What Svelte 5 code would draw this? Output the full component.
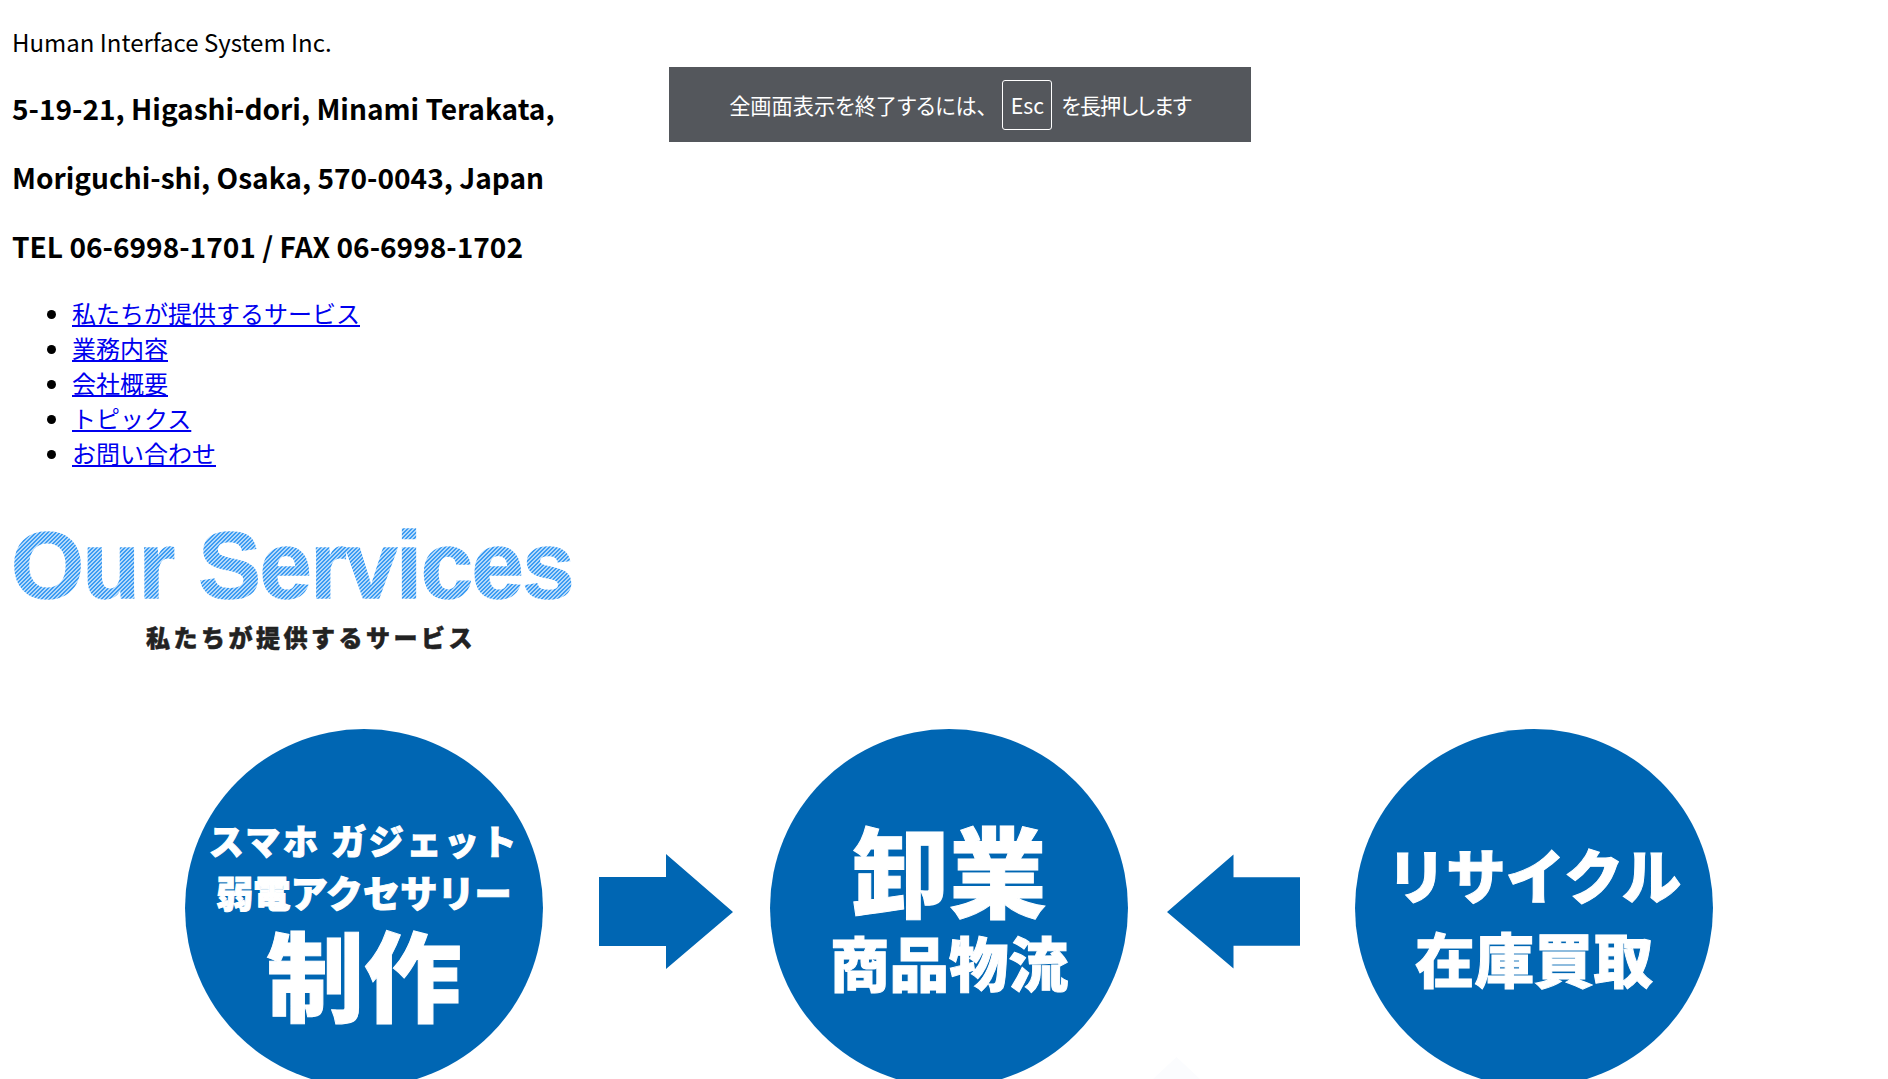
<script>
  const links = ['私たちが提供するサービス', '業務内容', '会社概要', 'トピックス', 'お問い合わせ'];
</script>

<div class="page">
  <p class="company">Human Interface System Inc.</p>
  <h3>5-19-21, Higashi-dori, Minami Terakata,</h3>
  <h3>Moriguchi-shi, Osaka, 570-0043, Japan</h3>
  <h3>TEL 06-6998-1701 / FAX 06-6998-1702</h3>
  <ul>
    {#each links as link}
      <li><a href="#top">{link}</a></li>
    {/each}
  </ul>

  <section class="title">
    <div class="en">Our Services</div>
    <div class="ja">私たちが提供するサービス</div>
  </section>

  <section class="flow">
    <div class="circle c1">
      <span class="l1">スマホ ガジェット</span>
      <span class="l2">弱電アクセサリー</span>
      <span class="big">制作</span>
    </div>
    <svg class="arrow a1" viewBox="0 0 134 115" aria-hidden="true"><path d="M0 23H67V0L134 58L67 115V92H0Z" /></svg>
    <div class="circle c2">
      <span class="big">卸業</span>
      <span class="mid">商品物流</span>
    </div>
    <svg class="arrow a2" viewBox="0 0 134 115" aria-hidden="true"><path d="M134 23H67V0L0 58L67 115V92H134Z" /></svg>
    <div class="circle c3">
      <span class="mid">リサイクル</span>
      <span class="mid low">在庫買取</span>
    </div>
  </section>
</div>

<div class="smudge"></div>

<div class="bubble">
  <span class="before">全画面表示を終了するには、</span>
  <kbd>Esc</kbd>
  <span class="after">を長押しします</span>
</div>

<style>
  :global(body) {
    margin: 0;
    background: #fff;
    color: #000;
    font-family: "Noto Sans CJK JP", "Noto Sans", sans-serif;
    font-size: 24px;
    overflow: hidden;
  }
  .page {
    height: 1079px;
    overflow: hidden;
    padding: 24px 12px 0;
    box-sizing: border-box;
  }
  .company { margin: 0 0 24px; }
  h3 { margin: 28px 0; font-size: 28.08px; line-height: 41.2px; font-weight: 700; }
  .company + h3 { margin-top: 0; padding-top: 4px; }
  ul { margin: 27px 0 24px; padding-left: 60px; }
  a { color: #00e; }

  .title { height: 149px; margin-top: 48.4px; }
  .en {
    margin-left: -3px;
    padding: 4px 0 0 2px;
    font-family: "Liberation Sans", sans-serif;
    font-weight: 700;
    font-size: 94px;
    line-height: 88px;
    letter-spacing: -1.5px;
    width: max-content;
    color: transparent;
    -webkit-text-stroke: 1.4px transparent;
    -webkit-text-fill-color: transparent;
    background: repeating-linear-gradient(135deg, #3d9cf2 0 1.7px, #b4d9fa 1.7px 2.83px);
    -webkit-background-clip: text;
    background-clip: text;
  }
  .ja {
    margin: 11px 0 0 134px;
    font-size: 24px;
    font-weight: 900;
    letter-spacing: 3.5px;
    color: #222;
    line-height: 32px;
    -webkit-text-stroke: 0.5px #222;
  }

  .flow { display: flex; align-items: flex-start; margin-top: 62px; padding-left: 173px; }
  .circle {
    flex: none;
    width: 358px;
    height: 358px;
    border-radius: 50%;
    background: #0066b3;
    color: #fff;
    display: flex;
    flex-direction: column;
    align-items: center;
    font-weight: 900;
    box-sizing: border-box;
    -webkit-text-stroke: 1px #fff;
  }
  .circle span { display: block; white-space: nowrap; }
  .c1 { padding-top: 89px; }
  .c2 { padding-top: 84.5px; }
  .c3 { padding-top: 111px; }
  .l1 { font-size: 35px; line-height: 44px; letter-spacing: 2.6px; }
  .l2 { font-size: 37.2px; line-height: 55px; margin-top: 2.5px; }
  .big { font-size: 97.5px; line-height: 108px; }
  .c1 .big { margin-top: -1.5px; }
  .mid { font-size: 59.5px; line-height: 66px; }
  .c2 .mid { margin-top: 6.5px; }
  .low { margin-top: 18px; }
  .arrow { flex: none; width: 134px; height: 115px; margin-top: 125px; fill: #0066b3; }
  .a1 { margin-left: 56px; margin-right: 37px; }
  .a2 { margin-left: 39px; margin-right: 55px; width: 133px; }

  .smudge {
    position: absolute;
    left: 1153px;
    top: 1057px;
    width: 47px;
    height: 22px;
    background: #fbfcfe;
    clip-path: polygon(50% 0, 100% 100%, 0 100%);
  }

  .bubble {
    position: absolute;
    left: 669px;
    top: 67px;
    width: 582px;
    height: 75px;
    background: #54575c;
    color: #fff;
    font-size: 21.2px;
    font-feature-settings: "palt";
    line-height: 72px;
    display: flex;
    align-items: center;
    justify-content: center;
    gap: 9px;
  }
  .before { margin-right: 6px; }
  .after { letter-spacing: -1px; }
  kbd {
    font: inherit;
    width: 50px;
    height: 50px;
    box-sizing: border-box;
    border: 1.5px solid #fff;
    border-radius: 3px;
    display: flex;
    align-items: center;
    justify-content: center;
  }
</style>
